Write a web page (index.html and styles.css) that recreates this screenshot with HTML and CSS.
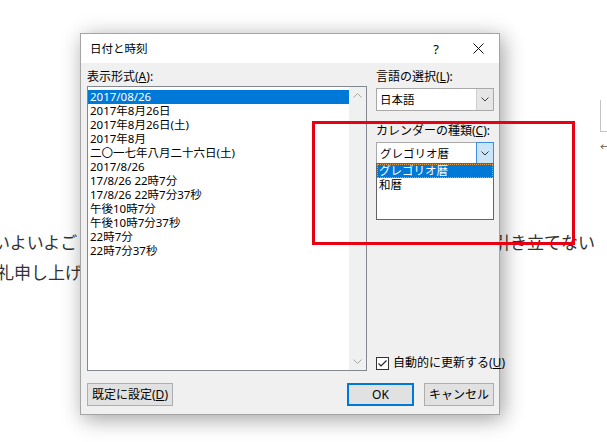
FILE: index.html
```html
<!DOCTYPE html>
<html lang="ja">
<head>
<meta charset="utf-8">
<title>日付と時刻</title>
<link rel="stylesheet" href="styles.css">
</head>
<body>
<div class="doc">
  <div class="line"><span class="frag-l1">いよいよご</span><span class="frag-r1">引き立てない</span></div>
  <div class="line"><span class="frag-l2">礼申し上げ</span></div>
</div>
<div class="side-box"></div>
<div class="side-arrow">←</div>

<div class="dialog">
  <div class="titlebar">
    <span class="title">日付と時刻</span>
    <span class="tb-help">?</span>
    <span class="tb-close"><svg width="11" height="11" viewBox="0 0 11 11"><path d="M0.5 0.5 L10.5 10.5 M10.5 0.5 L0.5 10.5" stroke="#111" stroke-width="1" fill="none"/></svg></span>
  </div>
  <div class="body">
    <div class="main">
      <div class="col-left">
        <div class="label">表示形式(<u>A</u>):</div>
        <div class="listbox">
          <div class="items">
            <div class="item sel">2017/08/26</div>
            <div class="item">2017年8月26日</div>
            <div class="item">2017年8月26日(土)</div>
            <div class="item">2017年8月</div>
            <div class="item">二〇一七年八月二十六日(土)</div>
            <div class="item">2017/8/26</div>
            <div class="item">17/8/26 22時7分</div>
            <div class="item">17/8/26 22時7分37秒</div>
            <div class="item">午後10時7分</div>
            <div class="item">午後10時7分37秒</div>
            <div class="item">22時7分</div>
            <div class="item">22時7分37秒</div>
          </div>
          <div class="scrollbar">
            <div class="sb-btn"><svg width="9" height="5" viewBox="0 0 9 5"><path d="M0.5 4.5 L4.5 0.5 L8.5 4.5" fill="none" stroke="#a6a6a6" stroke-width="1"/></svg></div>
            <div class="sb-btn"><svg width="9" height="5" viewBox="0 0 9 5"><path d="M0.5 0.5 L4.5 4.5 L8.5 0.5" fill="none" stroke="#a6a6a6" stroke-width="1"/></svg></div>
          </div>
        </div>
      </div>
      <div class="col-right">
        <div class="label">言語の選択(<u>L</u>):</div>
        <div class="combo">
          <span class="combo-text">日本語</span>
          <span class="combo-btn"><svg width="8" height="5" viewBox="0 0 8 5"><path d="M0.5 0.5 L4 4 L7.5 0.5" fill="none" stroke="#444" stroke-width="1"/></svg></span>
        </div>
        <div class="label label-cal">カレンダーの種類(<u>C</u>):</div>
        <div class="combo combo-open">
          <span class="combo-text">グレゴリオ暦</span>
          <span class="combo-btn open"><svg width="8" height="5" viewBox="0 0 8 5"><path d="M0.5 0.5 L4 4 L7.5 0.5" fill="none" stroke="#333" stroke-width="1"/></svg></span>
          <div class="dropdown">
            <div class="dd-item sel">グレゴリオ暦</div>
            <div class="dd-item">和暦</div>
          </div>
        </div>
        <div class="check-row">
          <span class="checkbox"><svg width="13" height="13" viewBox="0 0 13 13"><path d="M2.5 6.5 L5 9 L10.5 3.5" fill="none" stroke="#222" stroke-width="1.2"/></svg></span>
          <span class="check-label">自動的に更新する(<u>U</u>)</span>
        </div>
      </div>
    </div>
    <div class="buttons">
      <span class="btn btn-default">既定に設定(<u>D</u>)</span>
      <span class="btn btn-ok">OK</span>
      <span class="btn btn-cancel">キャンセル</span>
    </div>
  </div>
</div>

<div class="highlight"></div>
</body>
</html>
```

FILE: styles.css
```css
body {
  margin: 0;
  width: 607px;
  height: 442px;
  overflow: hidden;
  background: #fff;
  position: relative;
  font-family: "Noto Sans", "Noto Sans CJK JP", sans-serif;
}

.doc {
  padding-top: 227px;
  font-family: "Noto Sans CJK JP", sans-serif;
  font-size: 17px;
  color: #333;
}

.line {
  display: flex;
  justify-content: space-between;
  white-space: nowrap;
  height: 30px;
  line-height: 30px;
}

.frag-l1 { margin-left: -7px; }
.frag-r1 { margin-right: 12px; }
.frag-l2 { margin-left: -3px; }

.side-box {
  position: absolute;
  left: 600px;
  top: 100px;
  width: 20px;
  height: 31px;
  border-left: 1px solid #c4c4c4;
  border-bottom: 1px solid #c4c4c4;
}

.side-arrow {
  position: absolute;
  left: 600px;
  top: 140px;
  font-size: 10px;
  line-height: 14px;
  color: #555;
}

.dialog {
  position: absolute;
  left: 80px;
  top: 33px;
  width: 420px;
  height: 382px;
  box-sizing: border-box;
  border: 1px solid #a4a4a4;
  background: #f0f0f0;
  box-shadow: 3px 4px 20px rgba(0, 0, 0, 0.38);
  display: flex;
  flex-direction: column;
  font-size: 12px;
  color: #000;
  z-index: 1;
}

.titlebar {
  height: 29px;
  background: #fff;
  display: flex;
  align-items: center;
  padding: 0 11px 0 9px;
}

.title {
  flex: 1;
  font-size: 11.5px;
  line-height: 16px;
}

.tb-help {
  width: 20px;
  text-align: center;
  font-size: 13px;
  line-height: 16px;
}

.tb-close {
  width: 20px;
  margin-left: 22px;
  display: flex;
  justify-content: center;
}

.body {
  flex: 1;
  padding: 6px 5px 8px 6px;
  display: flex;
  flex-direction: column;
}

.main {
  display: flex;
  gap: 9px;
  height: 302px;
}

.col-left {
  width: 280px;
  display: flex;
  flex-direction: column;
}

.label {
  height: 16px;
  line-height: 16px;
  white-space: nowrap;
}

.listbox {
  margin-top: 1px;
  height: 285px;
  box-sizing: border-box;
  border: 1px solid #828790;
  background: #fff;
  display: flex;
}

.items {
  flex: 1;
  padding-top: 3px;
}

.item {
  height: 14px;
  line-height: 14px;
  padding-left: 2px;
  font-size: 11.5px;
  white-space: nowrap;
}

.item.sel {
  background: #0078d7;
  color: #fff;
}

.scrollbar {
  width: 17px;
  background: #f0f0f0;
  display: flex;
  flex-direction: column;
  justify-content: space-between;
}

.sb-btn {
  height: 17px;
  display: flex;
  align-items: center;
  justify-content: center;
}

.col-right {
  width: 118px;
  display: flex;
  flex-direction: column;
}

.combo {
  margin-top: 3px;
  height: 23px;
  box-sizing: border-box;
  border: 1px solid #a9a9a9;
  background: #fff;
  display: flex;
  position: relative;
}

.combo-text {
  flex: 1;
  padding-left: 3px;
  line-height: 21px;
  font-size: 11.5px;
  white-space: nowrap;
}

.combo-btn {
  width: 16px;
  background: #e6e6e6;
  border-left: 1px solid #cfcfcf;
  display: flex;
  align-items: center;
  justify-content: center;
}

.combo-btn.open {
  background: #cce4f7;
  border: 1px solid #3d8ee0;
  margin: -1px -1px -1px 0;
}

.label-cal {
  margin-top: 12px;
}

.dropdown {
  position: absolute;
  left: -1px;
  right: -1px;
  top: 20px;
  height: 57px;
  box-sizing: border-box;
  border: 1px solid #646464;
  background: #fff;
  z-index: 2;
}

.dd-item {
  height: 14px;
  line-height: 14px;
  padding-left: 2px;
  font-size: 11.5px;
  box-sizing: border-box;
  white-space: nowrap;
}

.dd-item.sel {
  background: #0078d7;
  color: #fff;
  outline: 1px dotted #e0a24e;
  outline-offset: -1px;
}

.check-row {
  margin-top: auto;
  height: 16px;
  display: flex;
  align-items: center;
  gap: 4px;
  white-space: nowrap;
}

.checkbox {
  width: 13px;
  height: 13px;
  box-sizing: border-box;
  border: 1px solid #333;
  background: #fff;
  display: flex;
  align-items: center;
  justify-content: center;
}

.checkbox svg {
  margin: -1px;
}

.check-label {
  line-height: 16px;
}

.buttons {
  margin-top: 12px;
  height: 23px;
  display: flex;
  gap: 10px;
}

.btn {
  height: 23px;
  box-sizing: border-box;
  border: 1px solid #adadad;
  background: #e1e1e1;
  display: flex;
  align-items: center;
  justify-content: center;
  line-height: 16px;
  white-space: nowrap;
}

.btn-default {
  width: 86px;
  margin-right: auto;
}

.btn-ok {
  width: 67px;
  border: 2px solid #0078d7;
}

.btn-cancel {
  width: 70px;
}

.highlight {
  position: absolute;
  left: 312px;
  top: 121px;
  width: 263px;
  height: 124px;
  box-sizing: border-box;
  border: 3px solid #e60012;
  z-index: 3;
}
```
